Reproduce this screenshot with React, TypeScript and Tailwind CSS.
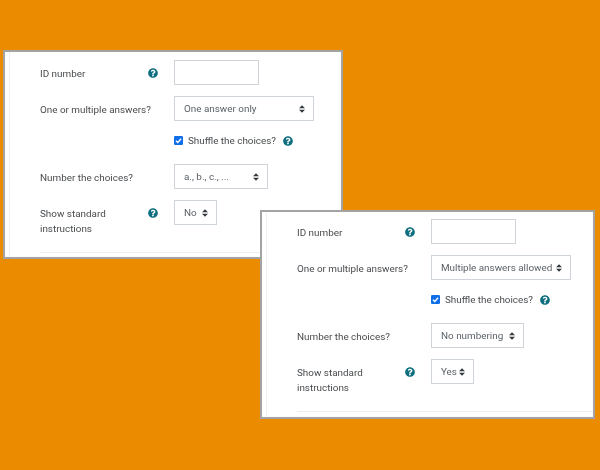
import React from "react";

function Help() {
  return (
    <svg viewBox="0 0 512 512" className="h-[10px] w-[10px] shrink-0 fill-[#0f6f80]">
      <path d="M504 256c0 137-111 248-248 248S8 393 8 256C8 119 119 8 256 8s248 111 248 248zM262.700 90c-54.500 0-89.300 23-116.500 63.800-3.500 5.300-2.400 12.400 2.700 16.300l34.700 26.300c5.200 3.900 12.600 3 16.700-2.100 17.900-22.700 30.100-35.800 57.300-35.800 20.400 0 45.700 13.100 45.700 32.900 0 15-12.400 22.700-32.500 34-23.500 13.200-54.600 29.600-54.600 70.600V302c0 6.600 5.400 12 12 12h56c6.600 0 12-5.400 12-12v-1.300c0-28.400 83-29.600 83-106.700 0-58-60.200-102-116.500-102zM256 338c-25.400 0-46 20.600-46 46s20.600 46 46 46 46-20.600 46-46-20.600-46-46-46z" />
    </svg>
  );
}

function Select({ value, w }: { value: string; w: string }) {
  return (
    <div className={`flex h-[25px] items-center justify-between border border-[#ced4da] bg-white pl-[9px] pr-[8px] text-[#5a6168] ${w}`}>
      <span className="whitespace-nowrap pt-[2px]">{value}</span>
      <svg viewBox="0 0 8 10" className="h-[8px] w-[6px] shrink-0 fill-[#343a40]">
        <path d="M4 0 8 4H0zM4 10 0 6h8z" />
      </svg>
    </div>
  );
}

function Row({ label, help, children, h = "h-[25px]" }: { label: React.ReactNode; help?: boolean; children: React.ReactNode; h?: string }) {
  return (
    <div className={`flex ${h}`}>
      <div className="w-[108px] shrink-0 pt-[6px] leading-[15px]">{label}</div>
      <div className="flex w-[26px] shrink-0 justify-start pt-[8px]">{help && <Help />}</div>
      {children}
    </div>
  );
}

function Panel({ className, first, numbering, instructions, numW, firstW }: { className: string; first: string; numbering: string; instructions: string; numW: string; firstW: string }) {
  return (
    <div className={`absolute h-[209px] overflow-hidden border-2 border-[#a3a3a3] bg-white ${className}`}>
      <div className="absolute bottom-0 left-[4px] top-0 w-px bg-[#f0f0f0]" />
      <div className="flex h-full flex-col pl-[35px] font-['Roboto',sans-serif] text-[9.9px] text-[#484b4e]">
        <Row label="ID number" help>
          <div className="h-[25px] w-[85px] border border-[#ced4da] bg-white" />
        </Row>
        <div className="mt-[11px]">
          <Row label={<span className="whitespace-nowrap">One or multiple answers?</span>}>
            <Select value={first} w={firstW} />
          </Row>
        </div>
        <div className="ml-[134px] mt-[13px] flex h-[14px] items-center">
          <svg viewBox="0 0 10 10" className="mb-[2px] h-[9px] w-[9px] shrink-0">
            <rect width="10" height="10" rx="1.500" fill="#0f6fe8" />
            <path d="M2.200 5.200 4.200 7.200 7.900 3" fill="none" stroke="#fff" strokeWidth="1.500" />
          </svg>
          <span className="ml-[5px] whitespace-nowrap">Shuffle the choices?</span>
          <span className="ml-[7px]"><Help /></span>
        </div>
        <div className="mt-[16px]">
          <Row label="Number the choices?">
            <Select value={numbering} w={numW} />
          </Row>
        </div>
        <div className="mt-[11px]">
          <Row label={<>Show standard<br />instructions</>} help h="h-[52px]">
            <Select value={instructions} w="w-[43px]" />
          </Row>
        </div>
        <div className="h-px bg-[#eeeeee]" />
      </div>
    </div>
  );
}

export default function App() {
  return (
    <div className="relative h-[470px] w-[600px] overflow-hidden bg-[#ea8b00] blur-[0.35px]">
      <Panel className="left-[3px] top-[50px] w-[340px] pt-[8px]" first="One answer only" numbering="a., b., c., ..." instructions="No" numW="w-[94px]" firstW="w-[140px]" />
      <Panel className="left-[260px] top-[210px] w-[335px] pt-[7px]" first="Multiple answers allowed" numbering="No numbering" instructions="Yes" numW="w-[93px]" firstW="w-[140px]" />
    </div>
  );
}
